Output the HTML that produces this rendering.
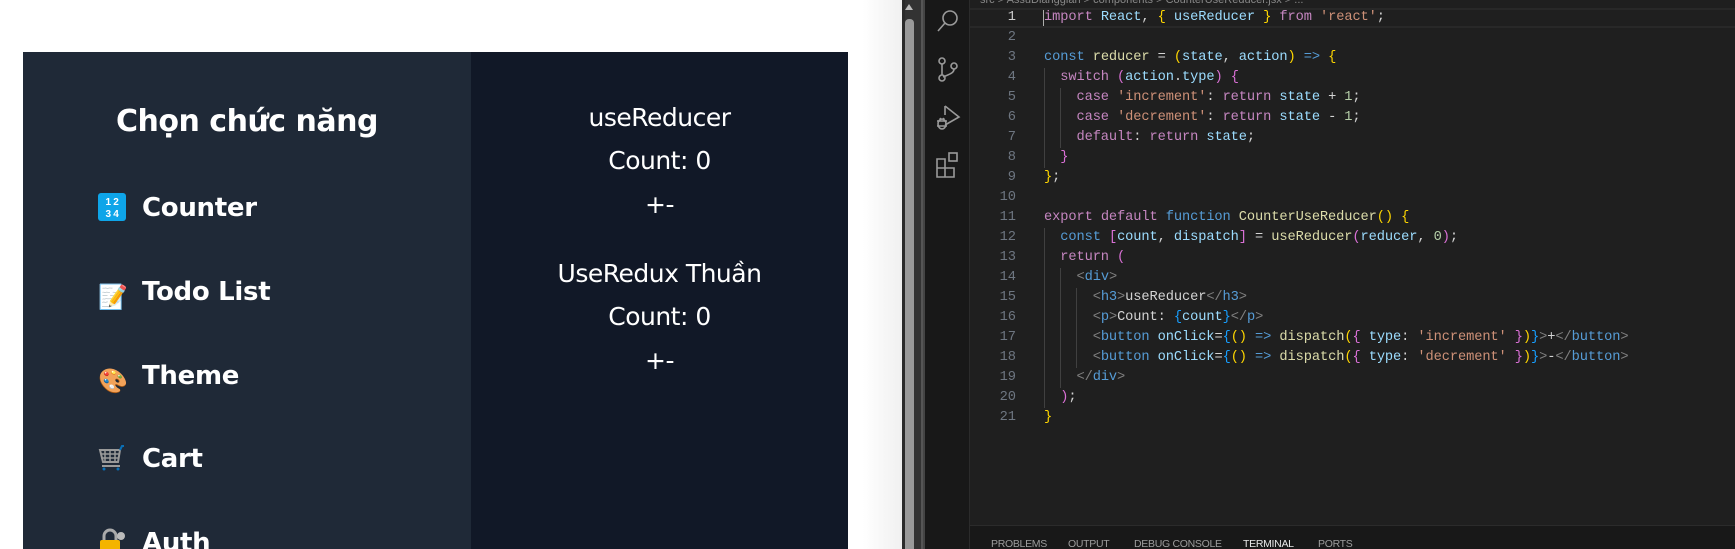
<!DOCTYPE html>
<html><head><meta charset="utf-8"><style>
*{margin:0;padding:0;box-sizing:border-box}
html,body{width:1735px;height:549px;overflow:hidden;background:#fff;position:relative;font-family:"Liberation Sans","DejaVu Sans",sans-serif}
.abs{position:absolute}
#grad{left:846px;top:0;width:56px;height:549px;background:linear-gradient(90deg,#fff 0%,#fff 30%,#f0f0f0 100%)}
#side{left:23px;top:52px;width:448px;height:497px;background:#1f2937}
#main{left:471px;top:52px;width:377px;height:497px;background:#111827}
h1{position:absolute;left:0;width:448px;top:50px;text-align:center;color:#fff;font-size:30px;font-weight:bold;line-height:40px;font-family:"DejaVu Sans","Liberation Sans",sans-serif;letter-spacing:-0.5px}
.item{position:absolute;left:75px;color:#fff;font-size:26px;font-weight:bold;font-family:"DejaVu Sans","Liberation Sans",sans-serif;height:32px;line-height:32px;white-space:nowrap;letter-spacing:-0.3px}
.ic{display:inline-block;width:28px;height:28px;vertical-align:-5px;margin-right:16px}
.m{position:absolute;left:0;width:377px;text-align:center;color:#fff;font-size:25px;line-height:32px;font-family:"DejaVu Sans","Liberation Sans",sans-serif;letter-spacing:-0.5px}
#sb{left:902px;top:0;width:21px;height:549px;background:#333}
#act{left:923px;top:0;width:47px;height:549px;background:#181818;border-left:2px solid #444;border-right:1px solid #2b2b2b}
#ed{left:970px;top:0;width:765px;height:549px;background:#1f1f1f}
.ln{position:absolute;left:0;width:46px;text-align:right;color:#6e7681;font:13.7px/20px "Liberation Mono",monospace}
.code{position:absolute;left:74px;white-space:pre;color:#d4d4d4;font:13.7px/20px "Liberation Mono",monospace;letter-spacing:-0.1px}
.k{color:#569cd6}.c{color:#c586c0}.s{color:#ce9178}.v{color:#9cdcfe}.f{color:#dcdcaa}.y{color:#ffd700}.p{color:#da70d6}.b{color:#179fff}.n{color:#b5cea8}.g{color:#808080}.t{color:#569cd6}
.guide{position:absolute;width:1px;background:#404040}
#panel{left:970px;top:525px;width:765px;height:24px;background:#181818;border-top:1px solid #2b2b2b}
.tab{position:absolute;top:12px;color:#9d9d9d;font:10.5px "Liberation Sans",sans-serif;letter-spacing:-0.3px}
</style></head><body>
<div id="grad" class="abs"></div>
<div id="side" class="abs">
<h1>Chọn chức năng</h1>
<div class="item" style="top:140px"><svg class="ic" viewBox="0 0 28 28"><rect width="28" height="28" rx="3" fill="#0ea5e9"/><text x="14" y="12" fill="#fff" font-size="10" font-weight="bold" text-anchor="middle" font-family="Liberation Sans">1 2</text><text x="14" y="24" fill="#fff" font-size="10" font-weight="bold" text-anchor="middle" font-family="Liberation Sans">3 4</text></svg>Counter</div>
<div class="item" style="top:224px"><span class="ic" style="font-size:24px;line-height:28px">📝</span>Todo List</div>
<div class="item" style="top:308px"><span class="ic" style="font-size:24px;line-height:28px">🎨</span>Theme</div>
<div class="item" style="top:391px"><svg class="ic" viewBox="0 0 28 28"><path d="M2 6h20l-2 12H5z" fill="none" stroke="#999" stroke-width="2"/><path d="M7 6v12M12 6v12M17 6v12M3 10h18M3 14h18" stroke="#999" stroke-width="1.5"/><path d="M22 6l2-4h2" stroke="#0a6fb5" stroke-width="2" fill="none"/><path d="M4 22h18" stroke="#999" stroke-width="2"/><circle cx="6" cy="25" r="1.5" fill="#0a6fb5"/><circle cx="20" cy="25" r="1.5" fill="#0a6fb5"/></svg>Cart</div>
<div class="item" style="top:475px"><svg class="ic" viewBox="0 0 28 28"><path d="M6 12V8a6 6 0 0 1 12 0v4" fill="none" stroke="#aaa" stroke-width="3"/><rect x="2" y="12" width="20" height="16" rx="2" fill="#f4b400"/><circle cx="23" cy="8" r="4" fill="#bbb"/></svg>Auth</div>
</div>
<div id="main" class="abs">
<div class="m" style="top:50px">useReducer</div>
<div class="m" style="top:93px">Count: 0</div>
<div class="m" style="top:137px">+-</div>
<div class="m" style="top:206px">UseRedux Thuần</div>
<div class="m" style="top:249px">Count: 0</div>
<div class="m" style="top:293px">+-</div>
</div>
<div id="sb" class="abs">
<div class="abs" style="left:0;top:0;width:3px;height:549px;background:#2b2b2b"></div>
<div class="abs" style="left:3px;top:19px;width:9px;height:530px;background:#9a9a9a;border-radius:4px 4px 0 0"></div>
<div class="abs" style="left:3px;top:4px;width:0;height:0;border-left:4.5px solid transparent;border-right:4.5px solid transparent;border-bottom:6px solid #bbb"></div>
<div class="abs" style="left:19px;top:0;width:2px;height:549px;background:#555"></div>
</div>
<div id="act" class="abs">
<svg class="abs" style="left:10px;top:8px" width="26" height="26" viewBox="0 0 26 26" fill="none" stroke="#9a9a9a" stroke-width="1.6"><circle cx="15" cy="10" r="7"/><path d="M10 15L3 23"/></svg>
<svg class="abs" style="left:10px;top:56px" width="26" height="28" viewBox="0 0 26 28" fill="none" stroke="#9a9a9a" stroke-width="1.6"><circle cx="7" cy="5" r="3"/><circle cx="7" cy="22" r="3"/><circle cx="19" cy="10" r="3"/><path d="M7 8v11M19 13c0 4-4 5-11 8"/></svg>
<svg class="abs" style="left:10px;top:103px" width="26" height="28" viewBox="0 0 26 28" fill="none" stroke="#9a9a9a" stroke-width="1.6"><path d="M10 3l14 11-14 8"/><path d="M10 3v9"/><ellipse cx="7" cy="21" rx="4" ry="5"/><path d="M2 18h10M2 23h10M5 15l1 2M9 15l-1 2"/></svg>
<svg class="abs" style="left:10px;top:151px" width="26" height="28" viewBox="0 0 26 28" fill="none" stroke="#9a9a9a" stroke-width="1.6"><path d="M2 8h8v18H2zM2 17h17v9h-9"/><rect x="14" y="2" width="8" height="8"/></svg>
</div>
<div id="ed" class="abs">
<div class="abs" style="left:0;top:0;width:765px;height:7px;overflow:hidden"><div style="position:absolute;top:-6px;left:10px;color:#888;font:11px/12px 'Liberation Sans',sans-serif;white-space:nowrap">src &gt; AssuDiangglan &gt; components &gt; CounterUseReducer.jsx &gt; ...</div></div>
<div class="abs" style="left:0;top:8px;width:765px;height:20px;border-top:2px solid #282828;border-bottom:2px solid #282828"></div>
<div class="abs" style="left:73px;top:10px;width:1px;height:16px;background:#aeafad"></div>
<div class="guide" style="left:74px;top:68px;height:100px"></div>
<div class="guide" style="left:90px;top:88px;height:60px"></div>
<div class="guide" style="left:74px;top:228px;height:180px"></div>
<div class="guide" style="left:90px;top:268px;height:120px"></div>
<div class="guide" style="left:106px;top:288px;height:80px"></div>
<div class="ln" style="top:8px;color:#ccc">1</div>
<div class="ln" style="top:28px">2<br>3<br>4<br>5<br>6<br>7<br>8<br>9<br>10<br>11<br>12<br>13<br>14<br>15<br>16<br>17<br>18<br>19<br>20<br>21</div>
<div class="code" style="top:8px"><span class="c">import</span> <span class="v">React</span>, <span class="y">{</span> <span class="v">useReducer</span> <span class="y">}</span> <span class="c">from</span> <span class="s">'react'</span>;

<span class="k">const</span> <span class="f">reducer</span> = <span class="y">(</span><span class="v">state</span>, <span class="v">action</span><span class="y">)</span> <span class="k">=&gt;</span> <span class="y">{</span>
  <span class="c">switch</span> <span class="p">(</span><span class="v">action</span>.<span class="v">type</span><span class="p">)</span> <span class="p">{</span>
    <span class="c">case</span> <span class="s">'increment'</span>: <span class="c">return</span> <span class="v">state</span> + <span class="n">1</span>;
    <span class="c">case</span> <span class="s">'decrement'</span>: <span class="c">return</span> <span class="v">state</span> - <span class="n">1</span>;
    <span class="c">default</span>: <span class="c">return</span> <span class="v">state</span>;
  <span class="p">}</span>
<span class="y">}</span>;

<span class="c">export</span> <span class="c">default</span> <span class="k">function</span> <span class="f">CounterUseReducer</span><span class="y">()</span> <span class="y">{</span>
  <span class="k">const</span> <span class="p">[</span><span class="v">count</span>, <span class="v">dispatch</span><span class="p">]</span> = <span class="f">useReducer</span><span class="p">(</span><span class="v">reducer</span>, <span class="n">0</span><span class="p">)</span>;
  <span class="c">return</span> <span class="p">(</span>
    <span class="g">&lt;</span><span class="t">div</span><span class="g">&gt;</span>
      <span class="g">&lt;</span><span class="t">h3</span><span class="g">&gt;</span>useReducer<span class="g">&lt;/</span><span class="t">h3</span><span class="g">&gt;</span>
      <span class="g">&lt;</span><span class="t">p</span><span class="g">&gt;</span>Count: <span class="b">{</span><span class="v">count</span><span class="b">}</span><span class="g">&lt;/</span><span class="t">p</span><span class="g">&gt;</span>
      <span class="g">&lt;</span><span class="t">button</span> <span class="v">onClick</span>=<span class="b">{</span><span class="y">()</span> <span class="k">=&gt;</span> <span class="f">dispatch</span><span class="y">(</span><span class="p">{</span> <span class="v">type</span>: <span class="s">'increment'</span> <span class="p">}</span><span class="y">)</span><span class="b">}</span><span class="g">&gt;</span>+<span class="g">&lt;/</span><span class="t">button</span><span class="g">&gt;</span>
      <span class="g">&lt;</span><span class="t">button</span> <span class="v">onClick</span>=<span class="b">{</span><span class="y">()</span> <span class="k">=&gt;</span> <span class="f">dispatch</span><span class="y">(</span><span class="p">{</span> <span class="v">type</span>: <span class="s">'decrement'</span> <span class="p">}</span><span class="y">)</span><span class="b">}</span><span class="g">&gt;</span>-<span class="g">&lt;/</span><span class="t">button</span><span class="g">&gt;</span>
    <span class="g">&lt;/</span><span class="t">div</span><span class="g">&gt;</span>
  <span class="p">)</span>;
<span class="y">}</span></div>
</div>
<div id="panel" class="abs">
<span class="tab" style="left:21px">PROBLEMS</span>
<span class="tab" style="left:98px">OUTPUT</span>
<span class="tab" style="left:164px">DEBUG CONSOLE</span>
<span class="tab" style="left:273px;color:#e7e7e7">TERMINAL</span>
<span class="tab" style="left:348px">PORTS</span>
</div>
</body></html>
